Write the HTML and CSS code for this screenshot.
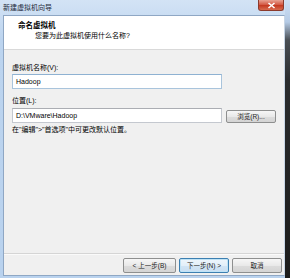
FILE: index.html
```html
<!DOCTYPE html>
<html lang="zh-CN">
<head>
<meta charset="utf-8">
<title>新建虚拟机向导</title>
<link rel="stylesheet" href="styles.css">
</head>
<body>
<div class="screen">
  <div class="window">
    <div class="titlebar">
      <span class="title">新建虚拟机向导</span>
      <span class="close"><svg width="9" height="7" viewBox="0 0 9 7"><path d="M1.5 1 L7.5 6 M7.5 1 L1.5 6" stroke="#fff" stroke-width="1.6" fill="none"/></svg></span>
    </div>
    <div class="client">
      <div class="header">
        <div class="h-title">命名虚拟机</div>
        <div class="h-sub">您要为此虚拟机使用什么名称?</div>
      </div>
      <div class="body">
        <div class="label first">虚拟机名称(V):</div>
        <div class="input focus">Hadoop</div>
        <div class="label second">位置(L):</div>
        <div class="row">
          <div class="input">D:\VMware\Hadoop</div>
          <div class="btn browse">浏览(R)...</div>
        </div>
        <div class="hint">在"编辑"&gt;"首选项"中可更改默认位置。</div>
      </div>
      <div class="footer">
        <div class="btn nav">&lt; 上一步(B)</div>
        <div class="btn nav default">下一步(N) &gt;</div>
        <div class="btn nav">取消</div>
      </div>
    </div>
  </div>
  <div class="edge"></div>
</div>
</body>
</html>
```
FILE: styles.css
```css
html, body {
  margin: 0;
  padding: 0;
}
body {
  width: 290px;
  height: 278px;
  overflow: hidden;
  font-family: "Liberation Sans", "Noto Sans CJK SC", sans-serif;
  font-size: 7px;
  line-height: 9px;
  color: #000;
}
.screen {
  display: flex;
  width: 290px;
  height: 278px;
  background: #bfd6f1;
}
.window {
  width: 285px;
  display: flex;
  flex-direction: column;
  background: linear-gradient(#d3e3f5, #bcd4ef 40px, #b9d2ee);
}
.edge {
  width: 5px;
  background: linear-gradient(#cfe0f4 0, #b5cbe6 22px, #4a4f55 40px, #2a2c2e 80px, #1c1c1c);
}
.titlebar {
  height: 15px;
  display: flex;
  justify-content: space-between;
  align-items: flex-start;
  flex-shrink: 0;
}
.title {
  margin: 4px 0 0 3px;
  color: #1e2a3a;
  line-height: 8px;
  font-size: 7px;
}
.close {
  width: 26px;
  height: 11px;
  margin-right: 1px;
  border-radius: 0 0 3px 3px;
  background: linear-gradient(#e8a293, #d2553f 50%, #c3371f 51%, #d86b4f);
  border: 1px solid #8b3a2c;
  border-top: none;
  box-sizing: border-box;
  display: flex;
  align-items: center;
  justify-content: center;
}
.close svg {
  display: block;
}
.client {
  margin: 0 0 2px 3px;
  flex: 1;
  border: 1px solid #8fa7c4;
  border-right-color: #c8d6e6;
  background: #f0f0f0;
  display: flex;
  flex-direction: column;
}
.header {
  height: 33px;
  background: #fff;
  border-bottom: 1px solid #d9d9d9;
  box-sizing: content-box;
}
.h-title {
  font-weight: bold;
  margin: 5px 0 0 14px;
  font-size: 7.5px;
}
.h-sub {
  margin: 1px 0 0 31px;
}
.body {
  flex: 1;
  padding: 0 0 0 8px;
}
.label.first {
  margin-top: 13px;
}
.label.second {
  margin-top: 7px;
}
.input {
  width: 210px;
  height: 15px;
  box-sizing: border-box;
  border: 1px solid #c4c8cf;
  border-top-color: #abadb3;
  background: #fff;
  padding: 2px 0 0 3px;
  margin-top: 2px;
}
.input.focus {
  border-color: #a9c4dc;
  border-top-color: #8fb2d2;
}
.row {
  display: flex;
  align-items: flex-end;
  gap: 4px;
}
.row .input {
  margin-top: 3px;
}
.btn {
  height: 13px;
  box-sizing: border-box;
  border: 1px solid #8e8f8f;
  border-radius: 2px;
  background: linear-gradient(#f6f6f6, #e9e9e9 50%, #dcdcdc 51%, #d4d4d4);
  display: flex;
  align-items: center;
  justify-content: center;
  font-size: 6.5px;
  color: #222;
}
.browse {
  width: 50px;
}
.hint {
  margin-top: 2px;
}
.footer {
  height: 22px;
  border-top: 1px solid #d5d5d5;
  box-shadow: inset 0 1px 0 #fafafa;
  display: flex;
  justify-content: flex-end;
  gap: 3px;
  padding: 4px 2px 0 0;
  box-sizing: border-box;
  flex-shrink: 0;
}
.nav {
  width: 50px;
  height: 15px;
}
.nav:first-child {
  width: 53px;
}
.nav.default {
  border-color: #3c7fb1;
  background: linear-gradient(#eef6fc, #e3eff9 50%, #d2e5f5 51%, #c9def2);
  box-shadow: inset 0 0 0 1px #bfe3f6;
}
```
